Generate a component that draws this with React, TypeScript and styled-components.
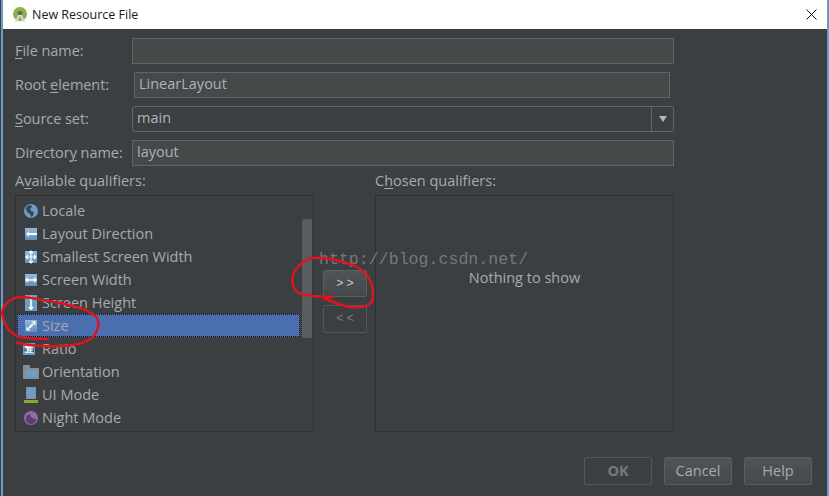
import React from "react";
import styled, { createGlobalStyle } from "styled-components";

const GlobalStyle = createGlobalStyle`
  html, body {
    margin: 0;
    padding: 0;
    background: #3c3f41;
    overflow: hidden;
  }
`;

const Window = styled.div`
  position: relative;
  width: 828px;
  height: 496px;
  margin-left: 1px;
  box-sizing: border-box;
  display: flex;
  flex-direction: column;
  border-left: 2px solid #6d9ac4;
  border-right: 2px solid #6d9ac4;
  font-family: "Open Sans", "Noto Sans", sans-serif;
  font-size: 14.5px;
  color: #a6abaf;
  background: #3c3f41;
`;

const TitleBar = styled.div`
  height: 29px;
  flex: none;
  display: flex;
  align-items: center;
  padding-left: 9px;
  background: #ffffff;
  color: #1a1a1a;
  font-size: 12.5px;
  gap: 4px;
`;

const CloseButton = styled.svg`
  margin-left: auto;
  margin-right: 10px;
`;

const Body = styled.div`
  flex: 1;
  padding: 9px 153px 0 12px;
  display: flex;
  flex-direction: column;
`;

const FormRow = styled.div<{ $narrow?: boolean }>`
  display: grid;
  grid-template-columns: ${(p) => (p.$narrow ? "119px 536px" : "117px 542px")};
  align-items: center;
  height: 26px;
  margin-bottom: 8px;
`;

const Label = styled.label`
  white-space: nowrap;
  padding-bottom: 2px;
  letter-spacing: -0.05px;
`;

const Mnemonic = styled.span`
  text-decoration: underline;
  text-underline-offset: 2px;
  text-decoration-thickness: 1px;
`;

const Field = styled.div`
  box-sizing: border-box;
  height: 26px;
  border: 1px solid #646464;
  background: #45494a;
  padding-left: 4px;
  line-height: 22px;
  color: #a9b4bc;
`;

const Combo = styled.div`
  box-sizing: border-box;
  height: 26px;
  display: flex;
  border: 1px solid #646464;
  border-radius: 3px;
  line-height: 22px;
  color: #a9b4bc;
  padding-left: 4px;
`;

const ComboValue = styled.div`
  flex: 1;
`;

const ComboArrow = styled.div`
  width: 21px;
  border-left: 1px solid #646464;
  display: flex;
  align-items: center;
  justify-content: center;
  &::before {
    content: "";
    border-left: 4px solid transparent;
    border-right: 4px solid transparent;
    border-top: 6px solid #b5b5b5;
  }
`;

const Qualifiers = styled.div`
  display: grid;
  grid-template-columns: 299px 61px 299px;
  grid-template-rows: 21px 237px;
`;

const ColumnTitle = styled.div`
  line-height: 14px;
`;

const ListBox = styled.div`
  position: relative;
  box-sizing: border-box;
  border: 1px solid #2f3234;
  padding: 3px 1px;
`;

const Row = styled.div<{ $selected?: boolean }>`
  box-sizing: border-box;
  width: 283px;
  height: 23px;
  display: flex;
  align-items: center;
  gap: 3px;
  padding-left: 6px;
  background: ${(p) => (p.$selected ? "#4b6eaf" : "transparent")};
  outline: ${(p) => (p.$selected ? "1px dotted #10131a" : "none")};
  outline-offset: -1px;
`;

const IconBox = styled.svg`
  flex: none;
`;

const ScrollThumb = styled.div`
  position: absolute;
  left: 286px;
  top: 23px;
  width: 10px;
  height: 119px;
  border-radius: 2px;
  background: #5a5d5f;
`;

const Transfer = styled.div`
  display: flex;
  flex-direction: column;
  gap: 8px;
  padding: 75px 8px 0 9px;
`;

const ArrowButton = styled.div<{ $active?: boolean }>`
  box-sizing: border-box;
  height: ${(p) => (p.$active ? "27px" : "28px")};
  display: flex;
  align-items: center;
  justify-content: center;
  border: 1px solid ${(p) => (p.$active ? "#5a5e60" : "#55585a")};
  border-radius: 2px;
  background: ${(p) => (p.$active ? "linear-gradient(#505456, #45494b)" : "transparent")};
  color: ${(p) => (p.$active ? "#c8c8c8" : "#7b7e80")};
  font-family: "Liberation Mono", monospace;
  font-size: 12px;
  letter-spacing: 3px;
  padding-left: 3px;
`;

const EmptyBox = styled(ListBox)`
  display: flex;
  justify-content: center;
  padding-top: 72px;
`;

const Footer = styled.div`
  position: absolute;
  right: 15px;
  bottom: 11px;
  display: flex;
  gap: 12px;
`;

const DialogButton = styled.div<{ $disabled?: boolean }>`
  box-sizing: border-box;
  width: 68px;
  height: 28px;
  display: flex;
  align-items: center;
  justify-content: center;
  padding-bottom: 2px;
  border: 1px solid ${(p) => (p.$disabled ? "#55585a" : "#5a5e60")};
  border-radius: 2px;
  background: ${(p) => (p.$disabled ? "transparent" : "linear-gradient(#505456, #45494b)")};
  color: ${(p) => (p.$disabled ? "#777a7c" : "#a6abaf")};
  font-weight: ${(p) => (p.$disabled ? 700 : 400)};
`;

const Watermark = styled.div`
  position: absolute;
  left: 316px;
  top: 250px;
  font-family: "Liberation Mono", monospace;
  font-size: 16.6px;
  line-height: 20px;
  color: #75787a;
  white-space: nowrap;
`;

const Scribble = styled.svg`
  position: absolute;
  left: -3px;
  top: 0;
  pointer-events: none;
`;

const Square = ({ children }: { children: React.ReactNode }) => (
  <IconBox width="16" height="16" viewBox="0 0 16 16">
    <defs>
      <linearGradient id="tile" x1="0" y1="0" x2="0" y2="1">
        <stop offset="0" stopColor="#93bbdc" />
        <stop offset="1" stopColor="#5f8fb8" />
      </linearGradient>
    </defs>
    <rect x="2" y="2" width="12" height="12" fill="url(#tile)" />
    {children}
  </IconBox>
);

const line = { stroke: "#fff", strokeWidth: 1.6, fill: "none" };

const icons: Record<string, React.ReactNode> = {
  Locale: (
    <IconBox width="16" height="16" viewBox="0 0 16 16">
      <circle cx="8" cy="8" r="7" fill="#6f9cc4" />
      <path d="M4 3l4-1 1 2-2 2 1 2 3 1-1 4-2 1-1-3-3-2-1-3z" fill="#34475a" />
    </IconBox>
  ),
  "Layout Direction": (
    <Square>
      <path d="M14 8H4" {...line} strokeWidth={2} />
      <path d="M6 5L3 8l3 3z" fill="#fff" />
    </Square>
  ),
  "Smallest Screen Width": (
    <Square>
      <path d="M8 2v12M3 8h10M6 4l2-2 2 2M6 12l2 2 2-2M5 6L3 8l2 2M11 6l2 2-2 2" {...line} strokeWidth={1.2} />
    </Square>
  ),
  "Screen Width": (
    <Square>
      <path d="M3 8h10M5 6L3 8l2 2M11 6l2 2-2 2" {...line} />
    </Square>
  ),
  "Screen Height": (
    <IconBox width="16" height="16" viewBox="0 0 16 16">
      <rect x="2" y="0" width="12" height="16" fill="#6d9ec8" />
      <path d="M8 2v12M6 4l2-2 2 2M6 12l2 2 2-2" {...line} />
    </IconBox>
  ),
  Size: (
    <Square>
      <path d="M6 10l4-4" {...line} strokeWidth={1.8} />
      <path d="M8.5 3.5H12.5V7.5zM3.5 8.5V12.5H7.5z" fill="#fff" />
    </Square>
  ),
  Ratio: (
    <IconBox width="16" height="16" viewBox="0 0 16 16">
      <rect x="0" y="2" width="12" height="12" fill="#6d9ec8" />
      <rect x="2" y="4" width="8" height="8" fill="#e4ecf3" />
      <text x="6" y="10.5" textAnchor="middle" fontFamily="Liberation Mono" fontSize="6" fontWeight="700" fill="#34475a">4:3</text>
    </IconBox>
  ),
  Orientation: (
    <IconBox width="16" height="16" viewBox="0 0 16 16" style={{ overflow: "visible" }}>
      <path d="M0 1h7v3h9v11H0z" fill="#8a8d8f" />
      <rect x="3" y="6" width="11" height="7" fill="#6d9ec8" />
    </IconBox>
  ),
  "UI Mode": (
    <IconBox width="16" height="16" viewBox="0 0 16 16">
      <rect x="3" y="0" width="10" height="12" fill="#8a8d8f" />
      <rect x="4" y="1" width="8" height="10" fill="#6d9ec8" />
      <rect x="1" y="13" width="14" height="3" fill="#8aa83a" />
    </IconBox>
  ),
  "Night Mode": (
    <IconBox width="16" height="16" viewBox="0 0 16 16">
      <circle cx="8" cy="8" r="7" fill="#8f6aa8" />
      <path d="M7 4a5 5 0 1 0 6 5 6 6 0 0 1-6-5z" fill="#5c3f70" />
    </IconBox>
  ),
};

const qualifiers = Object.keys(icons);

const App = () => (
  <>
    <GlobalStyle />
    <Window>
      <TitleBar>
        <svg width="16" height="16" viewBox="0 0 16 16">
          <circle cx="8" cy="7" r="7" fill="#8cb04a" />
          <path d="M3 15l4-9h2l4 9-2 0-3-6-3 6z" fill="#d8d8d8" />
          <rect x="5.5" y="4" width="5" height="4" rx="2" fill="#5f6a5a" />
        </svg>
        New Resource File
        <CloseButton width="11" height="11" viewBox="0 0 11 11">
          <path d="M0.5 0.5l10 10M10.5 0.5l-10 10" stroke="#111" strokeWidth="1" />
        </CloseButton>
      </TitleBar>
      <Body>
        <FormRow>
          <Label><Mnemonic>F</Mnemonic>ile name:</Label>
          <Field />
        </FormRow>
        <FormRow $narrow>
          <Label>Root <Mnemonic>e</Mnemonic>lement:</Label>
          <Field>LinearLayout</Field>
        </FormRow>
        <FormRow>
          <Label><Mnemonic>S</Mnemonic>ource set:</Label>
          <Combo>
            <ComboValue>main</ComboValue>
            <ComboArrow />
          </Combo>
        </FormRow>
        <FormRow>
          <Label>Director<Mnemonic>y</Mnemonic> name:</Label>
          <Field>layout</Field>
        </FormRow>
        <Qualifiers>
          <ColumnTitle>A<Mnemonic>v</Mnemonic>ailable qualifiers:</ColumnTitle>
          <div />
          <ColumnTitle>C<Mnemonic>h</Mnemonic>osen qualifiers:</ColumnTitle>
          <ListBox>
            {qualifiers.map((name) => (
              <Row key={name} $selected={name === "Size"}>
                {icons[name]}
                {name}
              </Row>
            ))}
            <ScrollThumb />
          </ListBox>
          <Transfer>
            <ArrowButton $active>&gt;&gt;</ArrowButton>
            <ArrowButton>&lt;&lt;</ArrowButton>
          </Transfer>
          <EmptyBox>Nothing to show</EmptyBox>
        </Qualifiers>
      </Body>
      <Footer>
        <DialogButton $disabled>OK</DialogButton>
        <DialogButton>Cancel</DialogButton>
        <DialogButton>Help</DialogButton>
      </Footer>
      <Watermark>http://blog.csdn.net/</Watermark>
      <Scribble width="829" height="496" viewBox="0 0 829 496" fill="none" stroke="#e0141c" strokeWidth="2.4" strokeLinecap="round" strokeLinejoin="round">
        <path d="M48 339C38 339 26 339 17 336C8 332 3 322 2 313C3 305 10 298 20 297C32 297 46 301 60 303C76 306 92 311 97 318C100 324 98 332 92 338C84 344 72 346 58 346C42 347 28 345 17 343" />
        <path d="M333 297C326 297 318 296 313 296C305 295 298 294 296 291C291 285 291 276 297 268C302 262 306 259 312 258C322 257 338 260 353 265C362 269 366 273 369 278C373 285 374 295 372 302C368 307 360 308 350 307C340 306 330 300 323 298" />
      </Scribble>
    </Window>
  </>
);

export default App;
